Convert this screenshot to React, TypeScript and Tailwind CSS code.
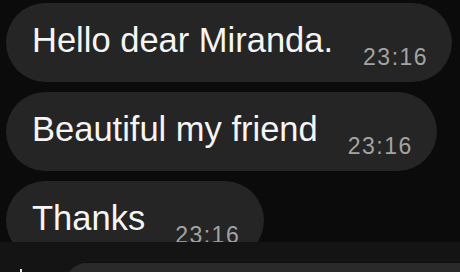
import React from "react"

const messages = [
  { id: 1, text: "Hello dear Miranda.", time: "23:16" },
  { id: 2, text: "Beautiful my friend", time: "23:16" },
  { id: 3, text: "Thanks", time: "23:16" }
]

const Bubble = ({ text, time }: { text: string; time: string }) => (
  <div className="flex h-[79px] w-fit shrink-0 items-start gap-[30px] rounded-full bg-[#252525] pl-[26px] pr-[24px] pt-[17px]">
    <span className="text-[34.5px] leading-[40px] text-[#f5f5f5]">{text}</span>
    <span className="mt-[25px] text-[23px] leading-[24px] tracking-[1.5px] text-[#a3a3a3]">{time}</span>
  </div>
)

const App = () => {
  return (
    <div
      className="flex h-[272px] w-[460px] flex-col overflow-hidden bg-[#0b0b0b]"
      style={{ fontFamily: '"Liberation Sans", Arial, sans-serif' }}
    >
      <div className="flex min-h-0 flex-1 flex-col gap-[10px] overflow-hidden pl-[6px] pt-[3px]">
        {messages.map((m) => (
          <Bubble key={m.id} text={m.text} time={m.time} />
        ))}
      </div>

      <div className="flex h-[30px] shrink-0 items-start gap-[40px] bg-[#141414] pl-[16px] pt-[20px]">
        <svg className="mt-[7px] h-[10px] w-[10px] shrink-0" viewBox="0 0 10 10" fill="none">
          <path d="M5 0v10M0 5h10" stroke="#e5e5e5" strokeWidth="2" />
        </svg>
        <div className="h-[40px] flex-1 rounded-l-[20px] border-t border-[#0e0e0e] bg-[#2a2a2a]" />
      </div>
    </div>
  )
}

export default App
